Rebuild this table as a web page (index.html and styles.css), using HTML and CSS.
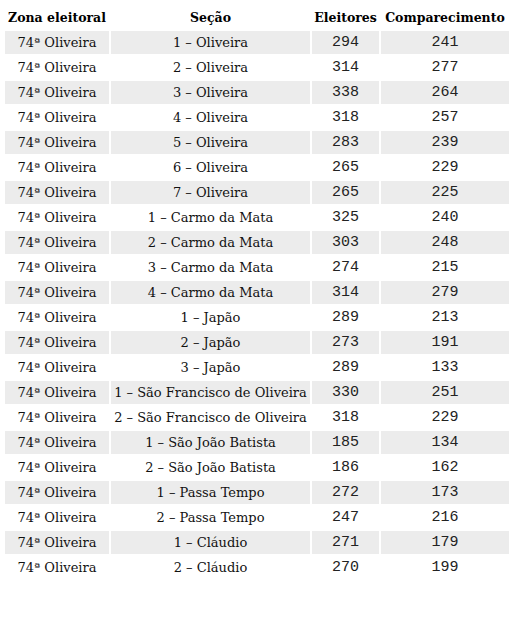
FILE: index.html
```html
<!DOCTYPE html>
<html>
<head>
<meta charset="utf-8">
<link rel="stylesheet" href="styles.css">
</head>
<body>
<table class="results">
<colgroup><col class="c-zona"><col class="c-secao"><col class="c-eleit"><col class="c-comp"></colgroup>
<thead>
<tr><th>Zona eleitoral</th><th>Seção</th><th>Eleitores</th><th>Comparecimento</th></tr>
</thead>
<tbody>
<tr><td>74ª Oliveira</td><td>1 – Oliveira</td><td class="num">294</td><td class="num">241</td></tr>
<tr><td>74ª Oliveira</td><td>2 – Oliveira</td><td class="num">314</td><td class="num">277</td></tr>
<tr><td>74ª Oliveira</td><td>3 – Oliveira</td><td class="num">338</td><td class="num">264</td></tr>
<tr><td>74ª Oliveira</td><td>4 – Oliveira</td><td class="num">318</td><td class="num">257</td></tr>
<tr><td>74ª Oliveira</td><td>5 – Oliveira</td><td class="num">283</td><td class="num">239</td></tr>
<tr><td>74ª Oliveira</td><td>6 – Oliveira</td><td class="num">265</td><td class="num">229</td></tr>
<tr><td>74ª Oliveira</td><td>7 – Oliveira</td><td class="num">265</td><td class="num">225</td></tr>
<tr><td>74ª Oliveira</td><td>1 – Carmo da Mata</td><td class="num">325</td><td class="num">240</td></tr>
<tr><td>74ª Oliveira</td><td>2 – Carmo da Mata</td><td class="num">303</td><td class="num">248</td></tr>
<tr><td>74ª Oliveira</td><td>3 – Carmo da Mata</td><td class="num">274</td><td class="num">215</td></tr>
<tr><td>74ª Oliveira</td><td>4 – Carmo da Mata</td><td class="num">314</td><td class="num">279</td></tr>
<tr><td>74ª Oliveira</td><td>1 – Japão</td><td class="num">289</td><td class="num">213</td></tr>
<tr><td>74ª Oliveira</td><td>2 – Japão</td><td class="num">273</td><td class="num">191</td></tr>
<tr><td>74ª Oliveira</td><td>3 – Japão</td><td class="num">289</td><td class="num">133</td></tr>
<tr><td>74ª Oliveira</td><td>1 – São Francisco de Oliveira</td><td class="num">330</td><td class="num">251</td></tr>
<tr><td>74ª Oliveira</td><td>2 – São Francisco de Oliveira</td><td class="num">318</td><td class="num">229</td></tr>
<tr><td>74ª Oliveira</td><td>1 – São João Batista</td><td class="num">185</td><td class="num">134</td></tr>
<tr><td>74ª Oliveira</td><td>2 – São João Batista</td><td class="num">186</td><td class="num">162</td></tr>
<tr><td>74ª Oliveira</td><td>1 – Passa Tempo</td><td class="num">272</td><td class="num">173</td></tr>
<tr><td>74ª Oliveira</td><td>2 – Passa Tempo</td><td class="num">247</td><td class="num">216</td></tr>
<tr><td>74ª Oliveira</td><td>1 – Cláudio</td><td class="num">271</td><td class="num">179</td></tr>
<tr><td>74ª Oliveira</td><td>2 – Cláudio</td><td class="num">270</td><td class="num">199</td></tr>
</tbody>
</table>
</body>
</html>
```
FILE: styles.css
```css
html, body { margin: 0; padding: 0; background: #fff; }
body { padding: 3px; }
.results {
  table-layout: fixed;
  border-collapse: separate;
  border-spacing: 2px;
  width: 508px;
  margin: 0;
  color: #111;
  font-family: "DejaVu Serif", serif;
  font-size: 13px;
}
.c-zona { width: 104px; }
.c-secao { width: 199px; }
.c-eleit { width: 67px; }
.c-comp { width: 128px; }
.results th, .results td {
  height: 23px;
  padding: 0;
  text-align: center;
  vertical-align: middle;
  white-space: nowrap;
  overflow: hidden;
}
.results th {
  font-weight: bold;
  font-size: 12.5px;
  color: #000;
  padding-top: 1px;
}
.results td.num {
  font-family: "Liberation Mono", "DejaVu Sans Mono", monospace;
  font-size: 15px;
  color: #222;
}
.results tbody tr:nth-child(odd) td { background: #ececec; }
```
